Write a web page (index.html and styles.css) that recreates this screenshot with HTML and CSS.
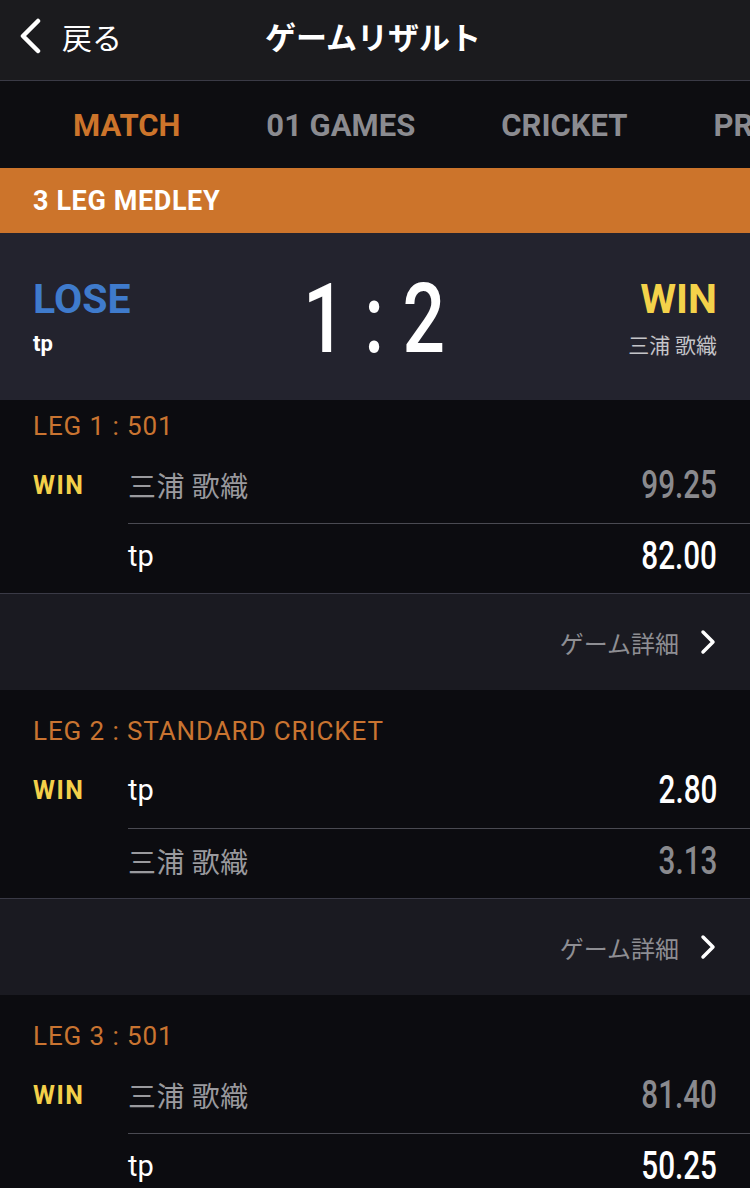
FILE: index.html
```html
<!DOCTYPE html>
<html lang="ja">
<head>
<meta charset="utf-8">
<title>ゲームリザルト</title>
<link rel="stylesheet" href="styles.css">
</head>
<body>
<div class="app">
  <header class="topbar">
    <div class="back">
      <svg class="back-icon" width="26" height="36" viewBox="0 0 26 36"><path d="M21 3 L6 18 L21 33" fill="none" stroke="#fff" stroke-width="4.5" stroke-linecap="round" stroke-linejoin="round"/></svg>
      <span class="back-text">戻る</span>
    </div>
    <h1 class="title">ゲームリザルト</h1>
  </header>

  <nav class="tabs">
    <span class="tab active">MATCH</span>
    <span class="tab">01 GAMES</span>
    <span class="tab">CRICKET</span>
    <span class="tab">PR</span>
  </nav>

  <div class="banner">3 LEG MEDLEY</div>

  <section class="score">
    <div class="side left">
      <div class="res lose">LOSE</div>
      <div class="pname me">tp</div>
    </div>
    <div class="bigscore"><span class="sc">1 : 2</span></div>
    <div class="side right">
      <div class="res win">WIN</div>
      <div class="pname other">三浦 歌織</div>
    </div>
  </section>

  <section class="leg first">
    <div class="leg-title">LEG 1 : 501</div>
    <div class="leg-body">
      <div class="leg-result">WIN</div>
      <div class="rows">
        <div class="row"><span class="name other">三浦 歌織</span><span class="val dim"><span class="num">99.25</span></span></div>
        <div class="row"><span class="name me">tp</span><span class="val"><span class="num">82.00</span></span></div>
      </div>
    </div>
  </section>
  <div class="detail"><span class="detail-text">ゲーム詳細</span><svg class="chev" width="18" height="26" viewBox="0 0 18 26"><path d="M4 3 L14 13 L4 23" fill="none" stroke="#fff" stroke-width="3.5" stroke-linecap="round" stroke-linejoin="round"/></svg></div>

  <section class="leg">
    <div class="leg-title">LEG 2 : STANDARD CRICKET</div>
    <div class="leg-body">
      <div class="leg-result">WIN</div>
      <div class="rows">
        <div class="row"><span class="name me">tp</span><span class="val"><span class="num">2.80</span></span></div>
        <div class="row"><span class="name other">三浦 歌織</span><span class="val dim"><span class="num">3.13</span></span></div>
      </div>
    </div>
  </section>
  <div class="detail"><span class="detail-text">ゲーム詳細</span><svg class="chev" width="18" height="26" viewBox="0 0 18 26"><path d="M4 3 L14 13 L4 23" fill="none" stroke="#fff" stroke-width="3.5" stroke-linecap="round" stroke-linejoin="round"/></svg></div>

  <section class="leg">
    <div class="leg-title">LEG 3 : 501</div>
    <div class="leg-body">
      <div class="leg-result">WIN</div>
      <div class="rows">
        <div class="row"><span class="name other">三浦 歌織</span><span class="val dim"><span class="num">81.40</span></span></div>
        <div class="row"><span class="name me">tp</span><span class="val"><span class="num">50.25</span></span></div>
      </div>
    </div>
  </section>
</div>
</body>
</html>
```

FILE: styles.css
```css
* { box-sizing: border-box; margin: 0; padding: 0; }
html, body { background: #0c0c10; }
body {
  margin: 0;
  width: 750px;
  height: 1188px;
  overflow: hidden;
  font-family: Roboto, "Noto Sans CJK JP", sans-serif;
  color: #fff;
}
.app { width: 750px; }

.topbar {
  height: 81px;
  background: #1b1b1e;
  border-bottom: 1px solid #3a3a46;
  display: flex;
  align-items: center;
  padding-left: 17px;
  padding-bottom: 9px;
}
.back { display: flex; align-items: center; width: 248px; }
.back-icon { display: block; }
.back-text {
  margin-left: 19px;
  font-family: "Noto Sans CJK JP", sans-serif;
  font-size: 30px;
  font-weight: 400;
  color: #fff;
}
.title {
  font-family: "Noto Sans CJK JP", sans-serif;
  font-size: 31px;
  font-weight: 700;
  color: #fff;
}

.tabs {
  height: 87px;
  background: #0d0d11;
  display: flex;
  align-items: center;
  gap: 86px;
  padding-left: 73px;
  white-space: nowrap;
  overflow: hidden;
  padding-top: 2px;
}
.tab {
  font-family: Roboto, sans-serif;
  font-size: 31px;
  font-weight: 700;
  color: #8b8b90;
}
.tab.active { color: #cc742b; }

.banner {
  height: 65px;
  background: #cc742b;
  display: flex;
  align-items: center;
  padding-left: 33px;
  font-size: 27px;
  font-weight: 700;
  letter-spacing: 0.6px;
  color: #fff;
}

.score {
  height: 167px;
  background: #23232e;
  display: flex;
  align-items: center;
  justify-content: space-between;
  padding: 0 33px 0 33px;
}
.side { width: 200px; display: flex; flex-direction: column; }
.side.right { align-items: flex-end; }
.res { font-size: 41px; font-weight: 700; line-height: 48px; }
.res.lose { color: #3f7bcc; }
.res.win { color: #f4d24a; }
.pname { margin-top: 7px; line-height: 28px; }
.pname.me { font-size: 22px; font-weight: 700; color: #fff; }
.pname.other { font-family: "Noto Sans CJK JP", sans-serif; font-size: 21px; color: #c4c4c8; }
.bigscore {
  display: flex;
  justify-content: center;
  width: 180px;
}
.sc {
  display: inline-block;
  font-family: Roboto, sans-serif;
  font-size: 96px;
  font-weight: 500;
  color: #fff;
  transform: scaleX(0.78);
  transform-origin: center;
  line-height: 96px;
  margin-top: 4px;
  margin-right: 2px;
  white-space: pre;
}

.leg {
  background: #0c0c10;
  padding-top: 26px;
  border-bottom: 1px solid #3a3a46;
}
.leg.first { padding-top: 11px; }
.leg-title {
  padding-left: 33px;
  line-height: 30px;
  font-size: 26px;
  font-weight: 400;
  letter-spacing: 0.9px;
  color: #c97431;
  margin-bottom: 12px;
}
.leg-body { display: flex; }
.leg-result {
  width: 128px;
  padding-left: 33px;
  height: 70px;
  padding-bottom: 6px;
  display: flex;
  align-items: center;
  font-size: 25px;
  font-weight: 700;
  letter-spacing: 1.5px;
  color: #f4d04a;
}
.rows { flex: 1; }
.row {
  height: 70px;
  padding-bottom: 6px;
  padding-right: 33px;
  display: flex;
  align-items: center;
  justify-content: space-between;
}
.row + .row { border-top: 1px solid #4a4a52; }
.name.other {
  font-family: "Noto Sans CJK JP", sans-serif;
  font-size: 28px;
  letter-spacing: 0.5px;
  color: #9a9a9e;
}
.name.me {
  font-family: Roboto, sans-serif;
  font-size: 29px;
  color: #fff;
}
.val { color: #fff; display: flex; justify-content: flex-end; }
.val.dim { color: #8a8a8e; }
.num {
  display: inline-block;
  font-family: Roboto, sans-serif;
  font-size: 38px;
  font-weight: 500;
  transform: scaleX(0.78);
  transform-origin: right center;
}

.detail {
  height: 96px;
  background: #1a1a21;
  display: flex;
  align-items: center;
  justify-content: flex-end;
  padding-right: 33px;
}
.detail-text {
  font-family: "Noto Sans CJK JP", sans-serif;
  font-size: 24px;
  color: #8e8e93;
  margin-right: 20px;
}
.chev { display: block; }
```
